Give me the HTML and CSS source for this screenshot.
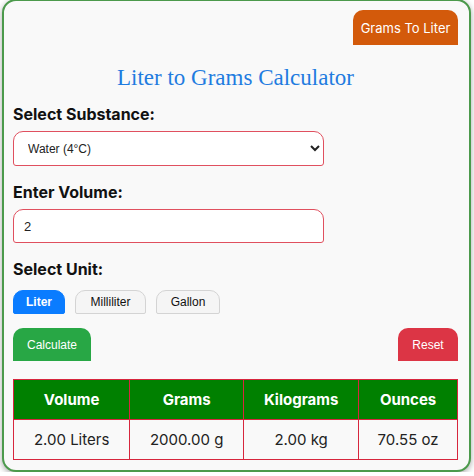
FILE: index.html
```html
<!DOCTYPE html>
<html lang="en">
<head>
  <meta charset="UTF-8">
  <meta name="viewport" content="width=device-width, initial-scale=1.0">
  <title>Liter to Grams Calculator</title>
  <link rel="stylesheet" href="styles.css">
</head>
<body>
  <div class="calculator">
    <div class="top-bar">
      <button class="switch-btn">Grams To Liter</button>
    </div>

    <h1>Liter to Grams Calculator</h1>

    <label for="substance">Select Substance:</label>
    <select id="substance" class="field">
      <option>Water (4°C)</option>
      <option>Milk</option>
      <option>Olive Oil</option>
    </select>

    <label for="volume">Enter Volume:</label>
    <input id="volume" class="field" type="number" value="2">

    <label>Select Unit:</label>
    <div class="units">
      <button class="unit active">Liter</button>
      <button class="unit">Milliliter</button>
      <button class="unit">Gallon</button>
    </div>

    <div class="actions">
      <button class="calc-btn">Calculate</button>
      <button class="reset-btn">Reset</button>
    </div>

    <table class="results">
      <thead>
        <tr>
          <th>Volume</th>
          <th>Grams</th>
          <th>Kilograms</th>
          <th>Ounces</th>
        </tr>
      </thead>
      <tbody>
        <tr>
          <td>2.00 Liters</td>
          <td>2000.00 g</td>
          <td>2.00 kg</td>
          <td>70.55 oz</td>
        </tr>
      </tbody>
    </table>
  </div>
</body>
</html>
```

FILE: styles.css
```css
body {
  margin: 0;
  padding: 0 3px 0 2px;
  background: #fff;
  font-family: Inter, Arial, sans-serif;
}
.calculator {
  border: 2px solid #4c9a4c;
  border-radius: 14px;
  background: #f9f9f9;
  padding: 9px 11px 10px 9px;
  box-shadow: 0 2px 6px rgba(0, 0, 0, 0.35);
  margin-top: -1px;
}
.top-bar {
  display: flex;
  justify-content: flex-end;
}
.switch-btn {
  background: #d35a0b;
  color: #fff;
  border: none;
  border-radius: 10px 10px 0 0;
  font-family: Inter, Arial, sans-serif;
  font-size: 13px;
  width: 105px;
  height: 35px;
  padding: 0;
}
h1 {
  font-family: "Liberation Serif", serif;
  font-weight: normal;
  color: #1f7ce0;
  font-size: 23px;
  text-align: center;
  margin: 20px 0 13px;
}
label {
  display: block;
  font-weight: bold;
  font-size: 16px;
  color: #111;
  margin-bottom: 7px;
}
.field {
  display: block;
  width: 311px;
  height: 35px;
  box-sizing: border-box;
  border: 1px solid #e0505f;
  border-radius: 10px 10px 3px 3px;
  background: #fff;
  font-family: Arial, sans-serif;
  font-size: 12px;
  color: #222;
  margin-bottom: 16px;
}
select.field {
  padding: 0 8px 0 10px;
}
input.field {
  height: 34px;
  padding: 0 10px;
  font-size: 13px;
  margin-bottom: 16px;
}
.units {
  display: flex;
  gap: 10px;
  margin-top: 11px;
  margin-bottom: 14px;
}
.unit {
  height: 24px;
  padding: 0;
  border: 1px solid #d4d4d4;
  border-radius: 10px 10px 2px 2px;
  background: #f5f5f5;
  font-family: Arial, sans-serif;
  font-size: 12px;
  color: #111;
}
.unit.active {
  width: 52px;
  background: #0a7cff;
  border-color: #0a7cff;
  color: #fff;
  font-weight: bold;
}
.unit:nth-child(2) {
  width: 71px;
}
.unit:nth-child(3) {
  width: 64px;
}
.actions {
  display: flex;
  justify-content: space-between;
  margin-bottom: 18px;
}
.calc-btn,
.reset-btn {
  height: 33px;
  border: none;
  border-radius: 10px 10px 0 0;
  color: #fff;
  font-family: Arial, sans-serif;
  font-size: 12px;
}
.calc-btn {
  background: #28a745;
  width: 78px;
}
.reset-btn {
  background: #dc3545;
  width: 60px;
}
.results {
  width: 100%;
  border-collapse: collapse;
  font-size: 15px;
}
.results th,
.results td {
  border: 1px solid #d7263d;
  text-align: center;
  height: 39px;
  padding: 0 10px;
}
.results th {
  background: #008000;
  color: #fff;
  font-weight: bold;
}
.results td {
  color: #222;
}
```
